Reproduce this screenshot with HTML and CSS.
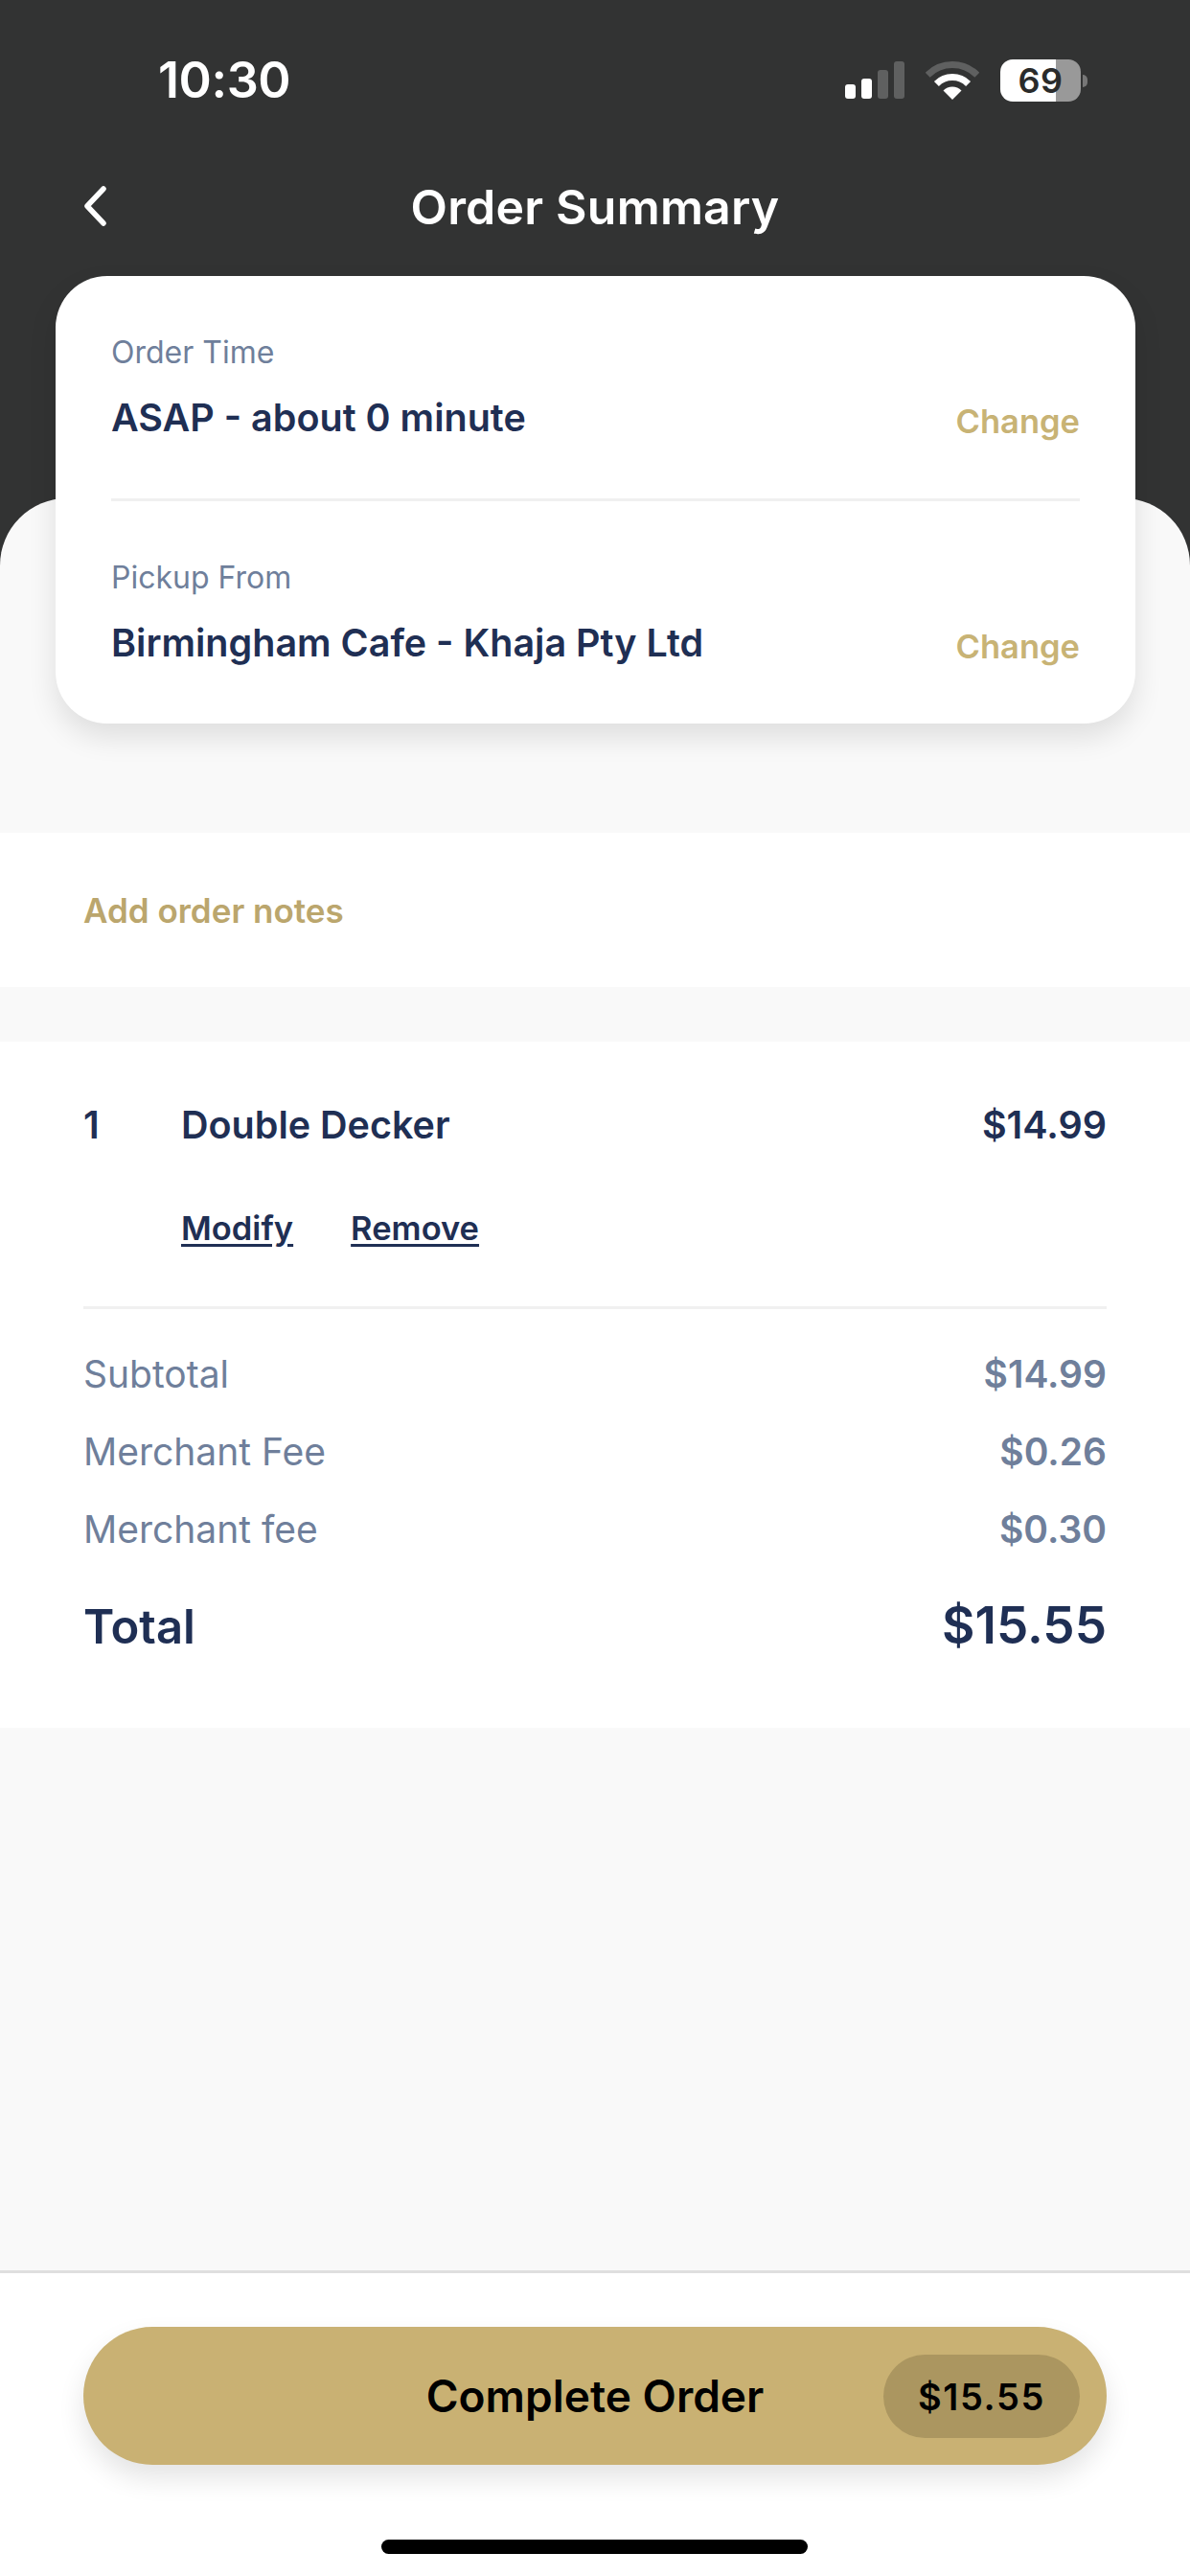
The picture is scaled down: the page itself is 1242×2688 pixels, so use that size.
FILE: index.html
```html
<!DOCTYPE html>
<html lang="en">
<head>
<meta charset="utf-8">
<title>Order Summary</title>
<link rel="stylesheet" href="styles.css">
</head>
<body>
<div class="page">
  <header class="top">
    <div class="status">
      <span class="clock">10:30</span>
      <div class="status-icons">
        <svg class="signal" width="63" height="39" viewBox="0 0 63 39"><rect x="0" y="24" width="11" height="15" rx="3" fill="#fff"/><rect x="17" y="18" width="11" height="21" rx="3" fill="#fff"/><rect x="34" y="9" width="11" height="30" rx="3" fill="#5f6060"/><rect x="51" y="0" width="11" height="39" rx="3" fill="#5f6060"/></svg>
        <svg class="wifi" width="56" height="40" viewBox="0 0 56 40"><path d="M2.2 14.2A36.5 36.5 0 0 1 53.8 14.2" fill="none" stroke="#5f6060" stroke-width="7"/><path d="M11.4 23.4A23.5 23.5 0 0 1 44.6 23.4" fill="none" stroke="#fff" stroke-width="7"/><path d="M28 40L18.5 30.5A13.4 13.4 0 0 1 37.5 30.5Z" fill="#fff"/></svg>
        <div class="battery"><span class="battery-num">69</span></div>
      </div>
    </div>
    <nav class="navbar">
      <svg class="back" width="26" height="42" viewBox="0 0 26 42"><path d="M22 3L5 21L22 39" fill="none" stroke="#fff" stroke-width="5.5" stroke-linecap="round" stroke-linejoin="round"/></svg>
      <h1 class="title">Order Summary</h1>
    </nav>
  </header>

  <section class="card">
    <div class="card-row first">
      <div>
        <div class="label">Order Time</div>
        <div class="value">ASAP - about 0 minute</div>
      </div>
      <span class="change">Change</span>
    </div>
    <div class="card-row">
      <div>
        <div class="label">Pickup From</div>
        <div class="value">Birmingham Cafe - Khaja Pty Ltd</div>
      </div>
      <span class="change">Change</span>
    </div>
  </section>

  <main class="sheet">
    <div class="notes">Add order notes</div>
    <section class="order">
      <div class="item">
        <span class="qty">1</span>
        <span class="item-name">Double Decker</span>
        <span class="item-price">$14.99</span>
      </div>
      <div class="actions"><a class="action">Modify</a><a class="action">Remove</a></div>
      <div class="rule"></div>
      <div class="line"><span class="line-name">Subtotal</span><span class="line-price">$14.99</span></div>
      <div class="line"><span class="line-name">Merchant Fee</span><span class="line-price">$0.26</span></div>
      <div class="line"><span class="line-name">Merchant fee</span><span class="line-price">$0.30</span></div>
      <div class="total"><span>Total</span><span class="total-price">$15.55</span></div>
    </section>
  </main>

  <footer class="footer">
    <div class="cta">
      <span class="cta-label">Complete Order</span>
      <span class="cta-price">$15.55</span>
    </div>
    <div class="home-bar"></div>
  </footer>
</div>
</body>
</html>
```

FILE: styles.css
```css
* { box-sizing: border-box; margin: 0; padding: 0; }
html, body { width: 1242px; height: 2688px; overflow: hidden; }
body { font-family: "Inter", "Open Sans", sans-serif; background: #323333; }
.page { width: 1242px; height: 2688px; display: flex; flex-direction: column; }

.top { height: 288px; color: #fff; flex: none; }
.status { height: 160px; display: flex; justify-content: space-between; padding: 54px 108px 0 165px; }
.clock { font-weight: 600; font-size: 52px; line-height: 60px; letter-spacing: -0.4px; }
.status-icons { display: flex; align-items: flex-start; width: 252px; }
.signal { margin-top: 10px; flex: none; }
.wifi { margin: 10px 0 0 21px; flex: none; }
.battery { position: relative; flex: none; margin: 8px 0 0 22px; width: 84px; height: 44px; border-radius: 13px; background: linear-gradient(90deg, #fff 0, #fff 58px, #999 58px, #999 100%); display: flex; align-items: center; justify-content: center; }
.battery::after { content: ""; position: absolute; left: 86px; top: 16px; width: 5px; height: 13px; border-radius: 0 7px 7px 0; background: #777; }
.battery-num { font-weight: 600; font-size: 36px; color: #2a2b2b; letter-spacing: 0.5px; }

.navbar { position: relative; height: 60px; display: flex; align-items: center; justify-content: center; margin-top: 26px; }
.back { position: absolute; left: 86px; top: 8px; }
.title { font-weight: 600; font-size: 50px; line-height: 60px; letter-spacing: 0.2px; }

.card { position: relative; z-index: 1; flex: none; width: 1127px; height: 467px; margin: 0 0 -235px 58px; padding: 0 58px; background: #fff; border-radius: 54px; box-shadow: 0 14px 30px rgba(0,0,0,.11); }
.card-row { display: flex; justify-content: space-between; align-items: flex-start; height: 232px; padding-top: 61px; }
.card-row.first { height: 235px; border-bottom: 3px solid #f0f0f0; }
.label { font-size: 32px; line-height: 38px; color: #6f7f9b; font-weight: 400; }
.value { margin-top: 25px; font-size: 39.5px; line-height: 48px; font-weight: 600; color: #1f2f54; }
.change { margin-top: 69px; font-size: 34.5px; line-height: 44px; font-weight: 600; color: #c8b375; }

.sheet { flex: 1; background: #f9f9f9; border-radius: 70px 70px 0 0; padding-top: 349px; }
.notes { height: 161px; background: #fff; padding-left: 87px; display: flex; align-items: center; font-size: 35px; font-weight: 600; color: #bba66d; }
.order { margin-top: 57px; height: 716px; background: #fff; padding: 62px 87px 0; }
.item { display: flex; font-size: 39.5px; line-height: 50px; font-weight: 600; color: #1f2f54; }
.qty { width: 102px; }
.item-name { flex: 1; }
.actions { display: flex; gap: 60px; margin: 61px 0 0 102px; font-size: 34.5px; line-height: 44px; font-weight: 600; color: #1f2f54; }
.action { text-decoration: underline; text-underline-offset: 4px; }
.rule { height: 3px; background: #f0f0f0; margin-top: 59px; }
.line { display: flex; justify-content: space-between; margin-top: 31px; height: 50px; line-height: 50px; font-size: 39px; color: #6f7f9b; }
.rule + .line { margin-top: 43px; }
.line-price { font-weight: 600; }
.total { display: flex; justify-content: space-between; align-items: baseline; margin-top: 43px; font-size: 49px; line-height: 64px; font-weight: 600; color: #1f2f54; }
.total-price { font-size: 53px; }

.footer { flex: none; height: 319px; background: #fff; border-top: 3px solid #dfdfdf; padding: 56px 87px 0; position: relative; }
.cta { position: relative; height: 144px; border-radius: 72px; background: #c9b173; display: flex; align-items: center; justify-content: center; box-shadow: 0 14px 28px rgba(0,0,0,.11); }
.cta-label { font-size: 46px; font-weight: 600; color: #000; }
.cta-price { position: absolute; right: 28px; top: 29px; width: 205px; height: 87px; border-radius: 44px; background: #ab9660; display: flex; align-items: center; justify-content: center; font-size: 38px; font-weight: 600; letter-spacing: 1.6px; color: #000; }
.home-bar { position: absolute; left: 398px; top: 278px; width: 445px; height: 15px; border-radius: 8px; background: #000; }
```
